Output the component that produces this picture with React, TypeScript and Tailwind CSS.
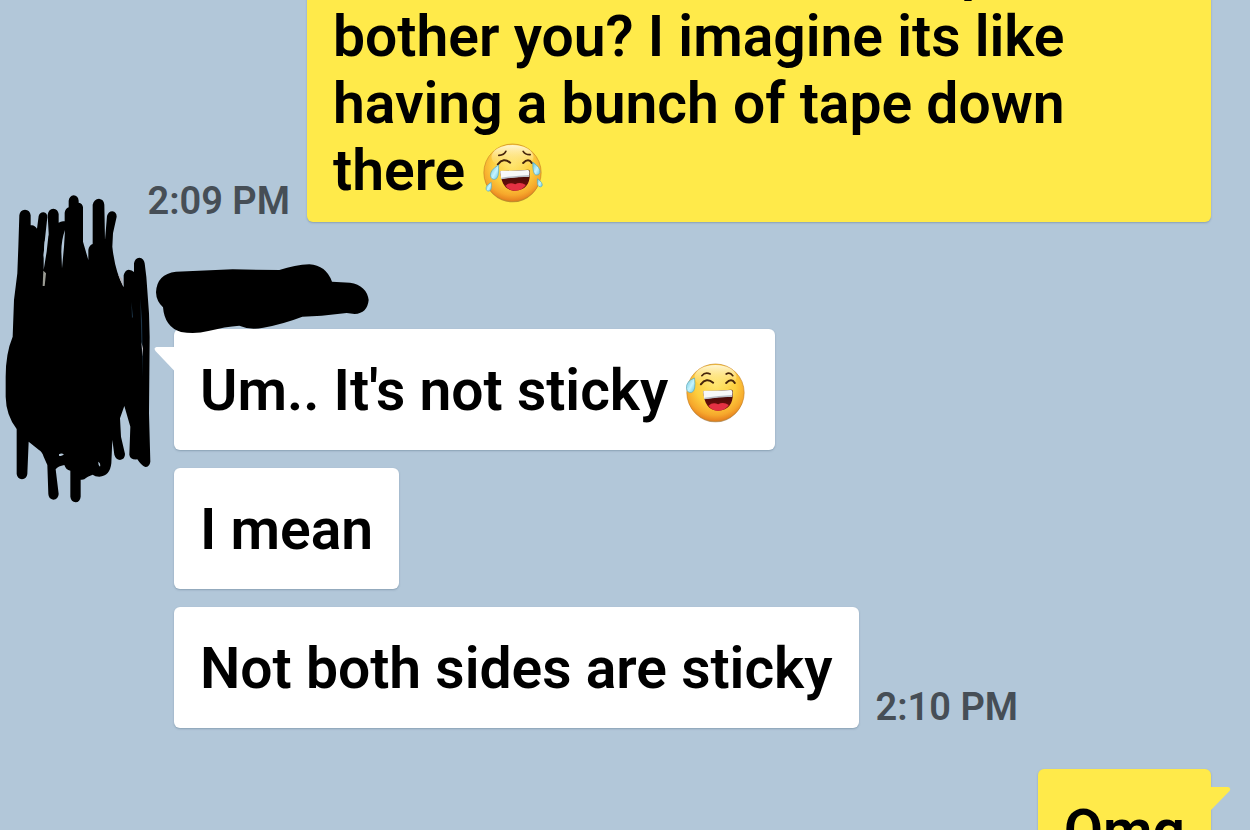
import React from "react";

type Side = "in" | "out";

interface BubbleProps {
  side: Side;
  tail?: boolean;
  className?: string;
  children: React.ReactNode;
}

const Bubble: React.FC<BubbleProps> = ({ side, tail, className = "", children }) => (
  <div
    className={`relative rounded-md px-[26px] shadow-[0_1px_2px_rgba(60,85,110,0.35)] ${
      side === "in" ? "bg-white" : "bg-[#ffea4a]"
    } ${className}`}
  >
    {tail && side === "in" && (
      <svg className="absolute top-[18px] -left-5 h-6 w-5" viewBox="0 0 20 24" fill="#fff">
        <path d="M20 0H2.500Q-.8.800 1.500 4L20 23.500Z" />
      </svg>
    )}
    {tail && side === "out" && (
      <svg className="absolute top-[18px] -right-5 h-6 w-5" viewBox="0 0 20 24" fill="#ffea4a">
        <path d="M0 0H17Q20.500.800 18.500 4L0 23Z" />
      </svg>
    )}
    {children}
  </div>
);

const Time: React.FC<{ children: string }> = ({ children }) => (
  <time className="shrink-0 text-[38px] leading-[42px] text-[#464e56]">{children}</time>
);

// Laughing face shared by both emoji, tears are passed in as children
const Face: React.FC<{ id: string; label: string; sad?: boolean; children: React.ReactNode }> = ({
  id,
  label,
  sad,
  children,
}) => (
  <svg
    role="img"
    aria-label={label}
    className="inline-block h-[60px] w-[67px] align-[-13px]"
    viewBox="0 0 198 180"
  >
    <defs>
      <radialGradient id={`${id}-skin`} cx="0.5" cy="0.36" r="0.65">
        <stop offset="0" stopColor="#ffe56b" />
        <stop offset="0.55" stopColor="#fdce3d" />
        <stop offset="0.82" stopColor="#f6a82c" />
        <stop offset="1" stopColor="#e47a1c" />
      </radialGradient>
      <linearGradient id={`${id}-shine`} x1="0" y1="0" x2="0" y2="1">
        <stop offset="0" stopColor="#fff8dc" stopOpacity="0.95" />
        <stop offset="1" stopColor="#ffe680" stopOpacity="0" />
      </linearGradient>
      <linearGradient id={`${id}-mouth`} x1="0" y1="0" x2="0" y2="1">
        <stop offset="0" stopColor="#310504" />
        <stop offset="1" stopColor="#7d120e" />
      </linearGradient>
      <linearGradient id={`${id}-tear`} x1="0" y1="0" x2="1" y2="1">
        <stop offset="0" stopColor="#66bfd8" />
        <stop offset="0.55" stopColor="#c5f4ff" />
        <stop offset="1" stopColor="#68c3de" />
      </linearGradient>
    </defs>
    <ellipse cx="99" cy="92" rx="84" ry="86" fill="#8a5a22" opacity="0.6" />
    <circle cx="99" cy="89" r="86" fill={`url(#${id}-skin)`} stroke="#c98525" strokeWidth="2" />
    <ellipse cx="99" cy="42" rx="63" ry="36" fill={`url(#${id}-shine)`} />
    <g fill="none" stroke="#46240b" strokeLinecap="round">
      <path
        strokeWidth="5"
        d={sad ? "M58 37Q74 36 79 25M131 25Q138 36 152 35" : "M58 38Q68 26 83 33M131 33Q142 26 151 38"}
      />
      <path strokeWidth="6" d="M55 64Q72 42 92 59M131 60Q147 44 157 60" />
    </g>
    <path
      d="M62 84Q108 84 146 80Q152 80 151 90C152 123 138 142 107 143C78 143 65 122 62 84Z"
      fill={`url(#${id}-mouth)`}
    />
    <path d="M62 86Q61 83 68 83Q108 84 145 81Q150 81 150 88L149 101Q108 101 65 108Z" fill="#f7f8fa" />
    <path d="M65 104Q110 98 149 96V101Q110 101 66 109Z" fill="#b9bec8" />
    <path d="M78 128Q91 116 107 124Q122 115 139 126Q128 143 107 143Q88 143 78 128Z" fill="#e43143" />
    <g fill={`url(#${id}-tear)`} stroke="#55a9bd" strokeWidth="2">
      {children}
    </g>
  </svg>
);

const JoyEmoji = () => (
  <Face id="joy" label="face with tears of joy" sad>
    <path d="M57 66Q31 82 33 98Q35 110 46 109Q60 107 57 66Z" />
    <path d="M160 58Q184 74 181 89Q178 98 169 96Q159 93 160 58Z" />
    <path d="M35 118Q18 128 20 139Q23 147 30 144Q38 139 35 118Z" />
    <path d="M174 107Q190 119 188 128Q184 134 178 130Q172 125 174 107Z" />
  </Face>
);

const SweatEmoji = () => (
  <Face id="sweat" label="smiling face with sweat">
    <path d="M36 45Q9 55 12 77Q15 91 28 88Q41 83 36 45Z" />
  </Face>
);

const AvatarScribble = () => (
  <svg
    aria-hidden="true"
    className="absolute top-0 left-0 h-[330px] w-[170px]"
    viewBox="0 0 510 990"
  >
    <path
      d="M58 106Q60 90 75 89Q90 90 92 106V136Q103 133 111 146L116 108Q120 96 131 97Q142 99 142 112L134 185L130 235L146 160L143 105Q145 87 160 86
        Q174 87 176 102V128Q184 122 194 124V98Q196 86 206 82V62Q208 48 221 46Q234 47 236 62V68Q248 70 249 82V185L265 240V210Q267 196 278 192
        V74Q282 57 297 56Q312 58 313 74L315 180L321 108Q325 94 337 94Q350 96 350 110L339 160L337 200Q345 275 371 322V286Q374 271 386 269
        Q396 270 402 276V250Q405 234 418 233Q432 235 434 250L439 290L447 400L449 470L447 700L451 845Q449 860 436 861Q424 857 412 838
        Q390 840 388 824L391 740L373 678L360 715L363 770L375 822Q375 838 360 840Q347 838 343 824L337 780L334 850Q330 888 298 890
        Q285 890 278 884Q262 890 259 893Q252 901 242 899V950Q240 966 227 967Q213 965 211 950V872Q198 870 193 855Q175 858 167 868
        L176 942Q175 958 160 959Q146 957 145 942L142 855L131 830Q126 815 117 810L86 785L82 882Q80 897 66 898Q52 896 50 882V747
        Q18 705 17 650V590Q17 520 38 470L42 360L52 280L55 200Z"
    />
    <path
      fill="#b2c7d9"
      d="M131 225L134 185L146 160L140 215L131 270ZM195 150Q184 180 184 215L186 265L192 200ZM177 823Q184 818 192 823Q184 831 177 827ZM295 845Q303 850 300 860Q294 858 295 845Z"
    />
    <path fill="#9b9c94" d="M130 272L138 280L134 318L128 318Z" />
    <path fill="#1c3447" d="M421 355L426 420L429 590L424 480ZM394 365L399 410L396 415Z" />
    <path fill="#b9b5ba" d="M424 486L429 505L428 530ZM354 283L367 296L370 320Z" />
  </svg>
);

const NameScribble = () => (
  <svg
    aria-hidden="true"
    className="absolute -top-[79px] -left-[34px] z-10 h-[130px] w-[240px]"
    viewBox="0 0 720 390"
  >
    <path d="M48 127Q50 72 108 65L278 58L418 60Q465 45 508 43Q558 46 576 95L630 98Q680 106 686 150Q682 190 644 192L620 189L545 197L487 200Q430 222 370 233Q330 241 298 227Q255 230 205 243Q165 254 123 246Q74 232 69 172Q49 154 48 127Z" />
  </svg>
);

const App: React.FC = () => {
  return (
    <main className="flex h-screen flex-col overflow-hidden bg-[#b2c7d9] font-['Roboto',sans-serif] text-[57px] leading-[67px] font-semibold text-black">
      {/* Outgoing, 2:09 PM */}
      <div className="-mt-16 flex shrink-0 items-end justify-end gap-[17px] pr-[39px] pl-4">
        <Time>2:09 PM</Time>
        <Bubble side="out" className="w-full max-w-[904px] pb-[18px]">
          <p className="pl-[628px]">p</p>
          <p>
            bother you? I imagine its like having a bunch of tape down there <JoyEmoji />
          </p>
        </Bubble>
      </div>

      {/* Incoming group, 2:10 PM */}
      <section className="relative mt-[107px] shrink-0 pl-[174px]">
        <div className="absolute -top-[149px] left-0">
          <AvatarScribble />
        </div>
        <div className="relative flex flex-col items-start gap-[18px]">
          <NameScribble />
          <Bubble side="in" tail className="pt-[28px] pb-[26px]">
            <p>
              Um.. It's not sticky <SweatEmoji />
            </p>
          </Bubble>
          <Bubble side="in" className="pt-[28px] pb-[26px]">
            <p>I mean</p>
          </Bubble>
          <div className="flex items-end gap-[17px]">
            <Bubble side="in" className="pt-[28px] pb-[26px]">
              <p>Not both sides are sticky</p>
            </Bubble>
            <Time>2:10 PM</Time>
          </div>
        </div>
      </section>

      {/* Outgoing */}
      <div className="mt-[41px] flex shrink-0 justify-end pr-[39px]">
        <Bubble side="out" tail className="pt-[28px] pb-[26px]">
          <p>Omg</p>
        </Bubble>
      </div>
    </main>
  );
};

export default App;
